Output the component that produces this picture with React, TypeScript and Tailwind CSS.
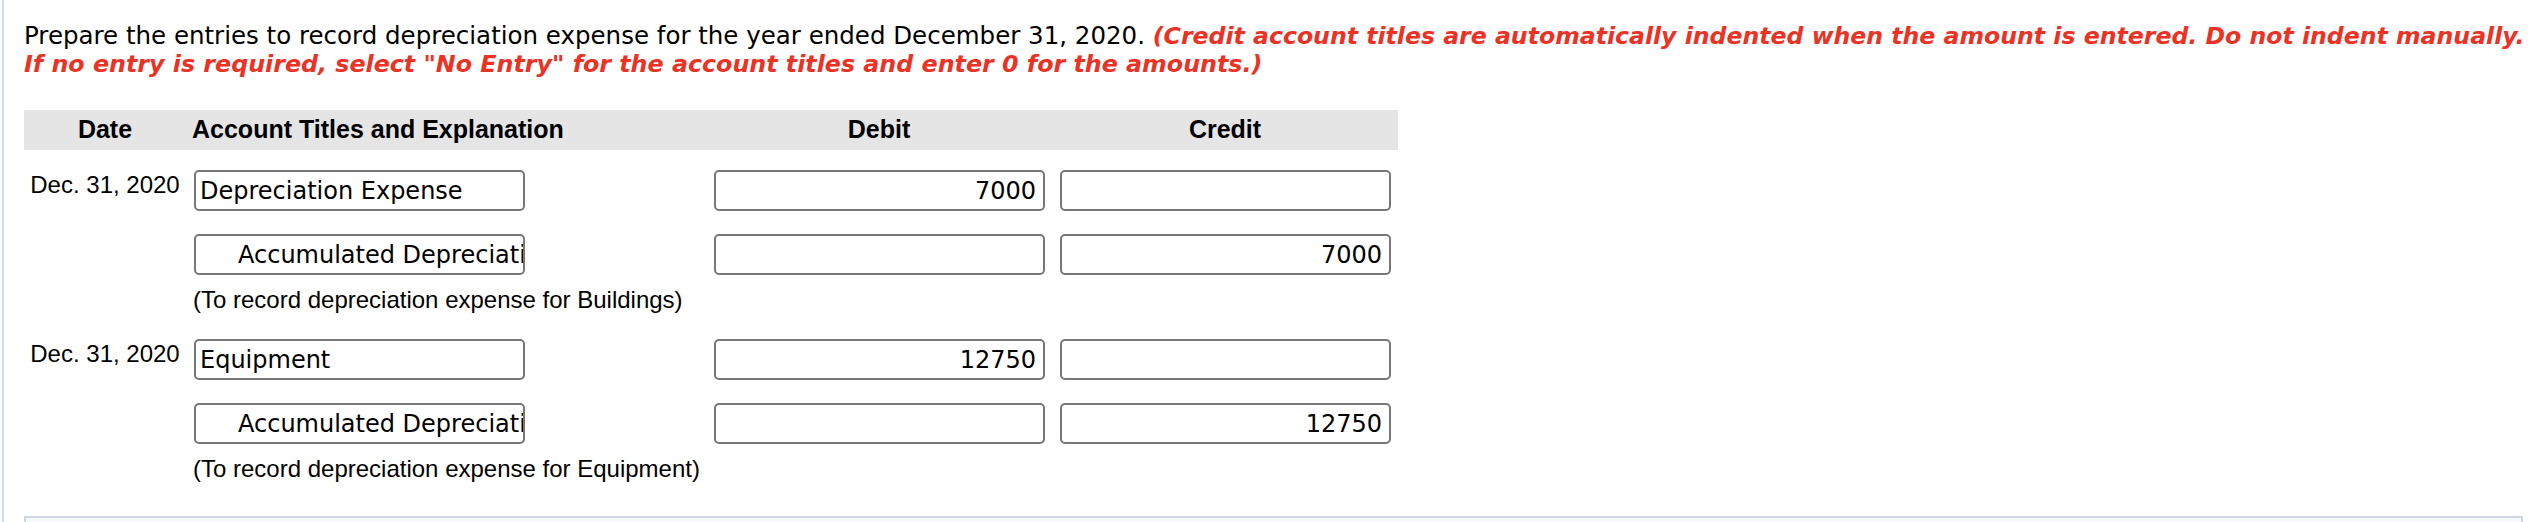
import React from "react";

type Line = {
  account: string;
  credit?: boolean;
  debit?: string;
  amount?: string;
};

type Entry = {
  date: string;
  lines: Line[];
  note: string;
};

const entries: Entry[] = [
  {
    date: "Dec. 31, 2020",
    lines: [
      { account: "Depreciation Expense", debit: "7000" },
      { account: "Accumulated Depreciation—Buildings", credit: true, amount: "7000" },
    ],
    note: "(To record depreciation expense for Buildings)",
  },
  {
    date: "Dec. 31, 2020",
    lines: [
      { account: "Equipment", debit: "12750" },
      { account: "Accumulated Depreciation—Equipment", credit: true, amount: "12750" },
    ],
    note: "(To record depreciation expense for Equipment)",
  },
];

const inputBase =
  "block h-[41px] w-[331px] rounded-[5px] border-2 border-[#777777] bg-white text-[24px] leading-[28px] text-black font-['DejaVu_Sans',sans-serif] outline-none";

function AmountBox({ value }: { value?: string }) {
  return (
    <input
      readOnly
      value={value ?? ""}
      className={`${inputBase} pr-[7px] pl-[4px] text-right`}
    />
  );
}

function EntryBlock({ entry, first }: { entry: Entry; first: boolean }) {
  return (
    <div className={first ? "mt-[20px]" : "mt-[25px]"}>
      {entry.lines.map((line, i) => (
        <div key={i} className={`flex ${i > 0 ? "mt-[23px]" : ""}`}>
          <div className="w-[162px] pt-[1px] text-center text-[24px] leading-[28px] text-black">
            {i === 0 ? entry.date : ""}
          </div>
          <div className="w-[520px] pl-[8px]">
            <input
              readOnly
              value={line.account}
              className={`${inputBase} pr-0 ${line.credit ? "pl-[42px]" : "pl-[4px]"}`}
            />
          </div>
          <div className="w-[346px] pl-[8px]">
            <AmountBox value={line.debit} />
          </div>
          <div className="w-[346px] pl-[8px]">
            <AmountBox value={line.amount} />
          </div>
        </div>
      ))}
      <div className="mt-[11px] ml-[169px] text-[24px] leading-[28px] text-black">
        {entry.note}
      </div>
    </div>
  );
}

export default function App() {
  return (
    <div className="h-[522px] w-[2536px] overflow-hidden bg-white pl-[2px] font-['Liberation_Sans',Arial,sans-serif]">
      <div className="h-full border-l-2 border-[#d5dce6] pl-[20px]">
        <p className="whitespace-nowrap pt-[22px] text-[24.5px] leading-[28px] text-black font-['DejaVu_Sans',Verdana,sans-serif]">
          Prepare the entries to record depreciation expense for the year ended December 31, 2020.{" "}
          <span className="text-[23.6px] font-bold italic text-[#ec3224]">
            (Credit account titles are automatically indented when the amount is entered. Do not indent manually.
            <br />
            <span className="text-[23.75px]">
              If no entry is required, select "No Entry" for the account titles and enter 0 for the amounts.)
            </span>
          </span>
        </p>

        <div className="mt-[32px] w-[1374px]">
          <div className="flex h-[40px] items-center bg-[#e5e5e5] text-[25px] font-bold text-black">
            <div className="w-[162px] text-center">Date</div>
            <div className="w-[520px] pl-[6px]">Account Titles and Explanation</div>
            <div className="w-[346px] text-center">Debit</div>
            <div className="w-[346px] text-center">Credit</div>
          </div>

          {entries.map((entry, i) => (
            <EntryBlock key={i} entry={entry} first={i === 0} />
          ))}
        </div>

        <div className="mt-[33px] h-[20px] w-[2499px] border-x-2 border-t-2 border-[#d0d7e1] bg-[#f7f9fb]" />
      </div>
    </div>
  );
}
